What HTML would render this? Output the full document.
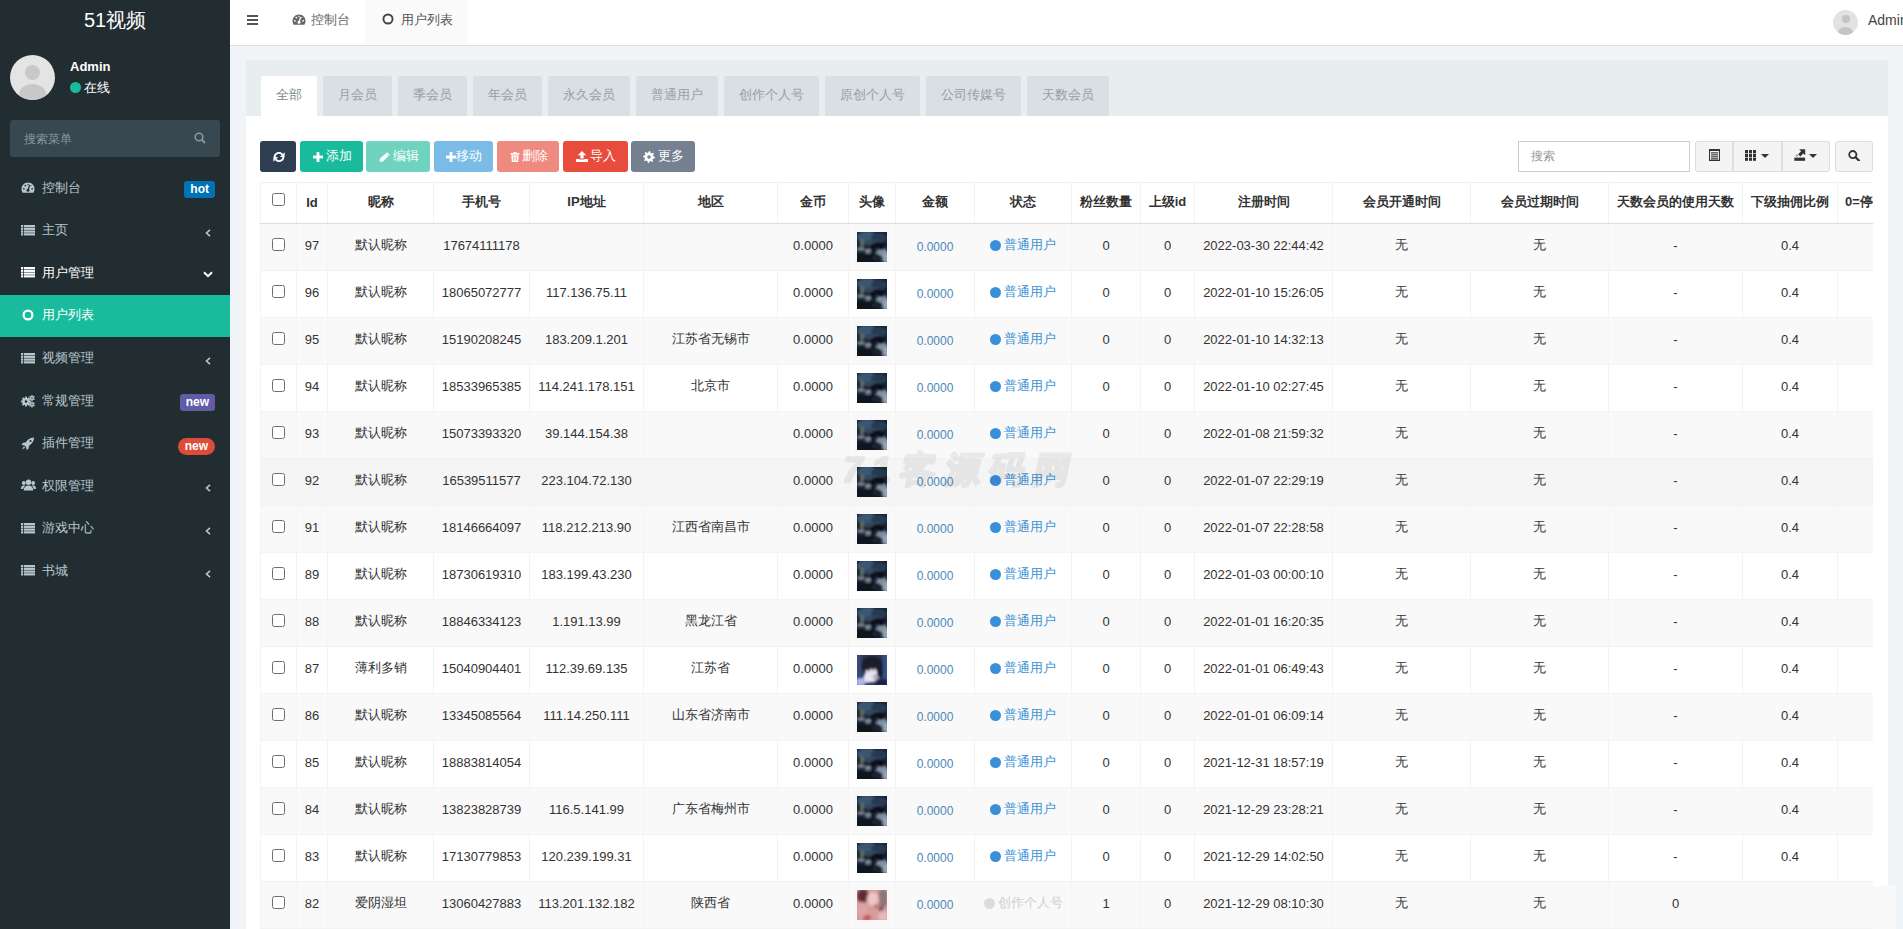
<!DOCTYPE html><html><head><meta charset="utf-8"><style>
*{box-sizing:border-box;margin:0;padding:0}
html,body{width:1903px;height:929px;overflow:hidden;background:#f1f4f6;font-family:"Liberation Sans",sans-serif;font-size:13px;color:#333}
.a{position:absolute}
#side{position:absolute;left:0;top:0;width:230px;height:929px;background:#222d32}
#logo{position:absolute;left:0;top:0;width:230px;height:45px;color:#fff;font-size:20px;text-align:center;line-height:40px}
#avatar{position:absolute;left:10px;top:55px;width:45px;height:45px;border-radius:50%;background:#e4e4e4;overflow:hidden}
#avatar:before{content:"";position:absolute;left:15px;top:10px;width:15px;height:15px;border-radius:50%;background:#c8c8c8}
#avatar:after{content:"";position:absolute;left:9px;top:29px;width:27px;height:20px;border-radius:50%;background:#c8c8c8}
#uname{position:absolute;left:70px;top:58.5px;color:#fff;font-weight:bold;font-size:13px}
#ustat{position:absolute;left:70px;top:79.2px;color:#fff;font-size:13px}
#ustat i{display:inline-block;width:11px;height:11px;border-radius:50%;background:#18bc9c;margin-right:3px;vertical-align:-1px}
#search{position:absolute;left:10px;top:120px;width:210px;height:37px;background:#374850;border-radius:3px;color:#8a979e;font-size:12px;padding:10.5px 0 0 14px}
#search svg{position:absolute;right:14px;top:12px}
.mi{position:absolute;left:0;width:230px;height:42.57px;color:#b8c7ce;font-size:13px}
.mi svg.ic{position:absolute;left:21px}
.mi .tx{position:absolute;left:42px;top:11.9px}
.mi .ar{position:absolute;left:205px;top:19.7px}
.mi.act{color:#fff}
.mi.sel{background:#18bc9c;color:#fff}
.badge{position:absolute;right:15px;top:14.2px;height:17px;padding:0 6px;border-radius:3px;color:#fff;font-size:12px;font-weight:bold;line-height:17px}
#hdr{position:absolute;left:230px;top:0;width:1673px;height:46px;background:#fff;border-bottom:1px solid #dcdfe2}
.htab{position:absolute;top:0;height:44px;color:#666;font-size:13px}
.htab .tx{position:absolute;top:10.8px}
#hav{position:absolute;left:1603px;top:10px;width:25px;height:25px;border-radius:50%;background:#e2e2e2;overflow:hidden}
#hav:before{content:"";position:absolute;left:8.5px;top:5px;width:8px;height:8px;border-radius:50%;background:#c4c4c4}
#hav:after{content:"";position:absolute;left:5px;top:16.5px;width:15px;height:11px;border-radius:50%;background:#c4c4c4}
#hname{position:absolute;left:1638px;top:12px;color:#444;font-size:14px}
#panel{position:absolute;left:246px;top:60px;width:1642px;height:900px;background:#fff}
#ph{position:absolute;left:0;top:0;width:1642px;height:56px;background:#e8edf0}
.tab{position:absolute;top:16px;height:40px;background:#d9dfe3;color:#95a0a6;font-size:13px;text-align:center;line-height:38px;border-radius:3px 3px 0 0}
.tab.on{background:#fff;color:#7b8a8b}
.btn{position:absolute;top:81px;height:31px;border-radius:3px;color:#fff;font-size:12.5px;line-height:30px;font-weight:500}
.btn svg{position:absolute}
.btn .tx{position:absolute;top:0}
#sinp{position:absolute;left:1272px;top:81px;width:172px;height:31px;border:1px solid #ccc;color:#999;padding:6px 0 0 12px;font-size:12px}
.tb{position:absolute;top:81px;height:31px;background:#f4f4f4;border:1px solid #ddd}
.tb svg{position:absolute}
#tw{position:absolute;left:14px;top:122px;width:1612.5px;height:800px;overflow:hidden}
#tbl{border-collapse:collapse;table-layout:fixed;width:1731px;font-size:13px;color:#333}
#tbl td,#tbl th{border:1px solid #f3f3f3;text-align:center;vertical-align:middle;padding:0 4px;white-space:nowrap;overflow:hidden}
#tbl th{font-weight:bold;height:41px;border-bottom:1px solid #ddd;border-top:1px solid #f0f0f0;padding-bottom:2px}
#tbl tr.r td{height:47px;padding-bottom:4px}
#tbl tr.s td{background:#f9f9f9;border-left-color:#f6f6f6;border-right-color:#f6f6f6}
#tbl tr.h td{background:#f5f5f5}
.cb{display:inline-block;width:13px;height:13px;border:1px solid #6f6f6f;border-radius:2.5px;background:#fff;vertical-align:middle;position:relative}
#tbl td .cb{top:-1.5px}
#tbl th .cb{top:-3.5px}
.av{display:inline-block;width:30px;height:30px;vertical-align:middle;overflow:hidden;position:relative;top:2px}
.av svg{display:block}
.amt{color:#4a88b8;position:relative;top:1px;font-size:12px}
.st{color:#3a91d6}
.st i{display:inline-block;width:11px;height:11px;border-radius:50%;background:#3a8fd9;margin-right:3px;vertical-align:-2px}
.st2{color:#cfcfcf}
.st2 i{display:inline-block;width:11px;height:11px;border-radius:50%;background:#dcdcdc;margin-right:3px;vertical-align:-2px}
#wm{position:absolute;left:838px;top:437px;font-size:41px;font-weight:900;font-style:italic;color:rgba(0,0,0,0.075);letter-spacing:-1px;white-space:nowrap;transform:skewX(-8deg)}
</style></head><body>
<div id="side"><div id="logo">51视频</div><div id="avatar"></div><div id="uname">Admin</div><div id="ustat"><i></i>在线</div>
<div id="search">搜索菜单<svg width="12" height="12" viewBox="0 0 12 12"><circle cx="5" cy="5" r="3.8" fill="none" stroke="#8a979e" stroke-width="1.6"/><path d="M7.8 7.8L11 11" stroke="#8a979e" stroke-width="2"/></svg></div>
<div class="mi" style="top:166.80px"><svg width="14" height="11" viewBox="0 0 14 11" style="position:absolute;left:21px;top:15.5px"><path d="M7 0.5C3.4 0.5 0.5 3.4 0.5 7C0.5 8.5 0.9 9.8 1.6 10.8H12.4C13.1 9.8 13.5 8.5 13.5 7C13.5 3.4 10.6 0.5 7 0.5Z" fill="#b8c7ce"/><circle cx="7" cy="8.2" r="1.5" fill="#222d32"/><path d="M7 8.2L8.6 3" stroke="#222d32" stroke-width="1.2"/><circle cx="2.9" cy="6.8" r="0.9" fill="#222d32"/><circle cx="4.3" cy="3.6" r="0.9" fill="#222d32"/><circle cx="7" cy="2.4" r="0.7" fill="#222d32"/><circle cx="11.1" cy="6.8" r="0.9" fill="#222d32"/><circle cx="9.8" cy="3.6" r="0.6" fill="#222d32"/></svg><span class="tx">控制台</span><span class="badge" style="background:#0073b7">hot</span></div>
<div class="mi" style="top:209.37px"><svg width="14" height="11" viewBox="0 0 14 11" style="position:absolute;left:21px;top:15.5px"><rect x="0" y="0.00" width="2.2" height="2.2" fill="#b8c7ce"/><rect x="3" y="0.00" width="11" height="2.2" fill="#b8c7ce"/><rect x="0" y="2.75" width="2.2" height="2.2" fill="#b8c7ce"/><rect x="3" y="2.75" width="11" height="2.2" fill="#b8c7ce"/><rect x="0" y="5.50" width="2.2" height="2.2" fill="#b8c7ce"/><rect x="3" y="5.50" width="11" height="2.2" fill="#b8c7ce"/><rect x="0" y="8.25" width="2.2" height="2.2" fill="#b8c7ce"/><rect x="3" y="8.25" width="11" height="2.2" fill="#b8c7ce"/></svg><span class="tx">主页</span><svg class="ar" width="6" height="8" viewBox="0 0 6 8"><path d="M5 0.8L1.5 4L5 7.2" fill="none" stroke="currentColor" stroke-width="1.6"/></svg></div>
<div class="mi act" style="top:251.94px"><svg width="14" height="11" viewBox="0 0 14 11" style="position:absolute;left:21px;top:15.5px"><rect x="0" y="0.00" width="2.2" height="2.2" fill="#fff"/><rect x="3" y="0.00" width="11" height="2.2" fill="#fff"/><rect x="0" y="2.75" width="2.2" height="2.2" fill="#fff"/><rect x="3" y="2.75" width="11" height="2.2" fill="#fff"/><rect x="0" y="5.50" width="2.2" height="2.2" fill="#fff"/><rect x="3" y="5.50" width="11" height="2.2" fill="#fff"/><rect x="0" y="8.25" width="2.2" height="2.2" fill="#fff"/><rect x="3" y="8.25" width="11" height="2.2" fill="#fff"/></svg><span class="tx">用户管理</span><svg class="ar" style="left:203px;top:19.5px" width="10" height="7" viewBox="0 0 10 7"><path d="M1 1.2L5 5.2L9 1.2" fill="none" stroke="currentColor" stroke-width="2"/></svg></div>
<div class="mi sel" style="top:294.51px"><svg width="12" height="12" viewBox="0 0 12 12" style="position:absolute;left:22px;top:14.5px"><circle cx="6" cy="6" r="4.40" fill="none" stroke="#fff" stroke-width="2.2"/></svg><span class="tx">用户列表</span></div>
<div class="mi" style="top:337.08px"><svg width="14" height="11" viewBox="0 0 14 11" style="position:absolute;left:21px;top:15.5px"><rect x="0" y="0.00" width="2.2" height="2.2" fill="#b8c7ce"/><rect x="3" y="0.00" width="11" height="2.2" fill="#b8c7ce"/><rect x="0" y="2.75" width="2.2" height="2.2" fill="#b8c7ce"/><rect x="3" y="2.75" width="11" height="2.2" fill="#b8c7ce"/><rect x="0" y="5.50" width="2.2" height="2.2" fill="#b8c7ce"/><rect x="3" y="5.50" width="11" height="2.2" fill="#b8c7ce"/><rect x="0" y="8.25" width="2.2" height="2.2" fill="#b8c7ce"/><rect x="3" y="8.25" width="11" height="2.2" fill="#b8c7ce"/></svg><span class="tx">视频管理</span><svg class="ar" width="6" height="8" viewBox="0 0 6 8"><path d="M5 0.8L1.5 4L5 7.2" fill="none" stroke="currentColor" stroke-width="1.6"/></svg></div>
<div class="mi" style="top:379.65px"><svg width="14" height="13" viewBox="0 0 14 13" style="position:absolute;left:21px;top:15px"><g fill="#b8c7ce"><circle cx="5" cy="6.5" r="3.6"/><rect x="4" y="1.6" width="2" height="2" transform="rotate(0 5 6.5)"/><rect x="4" y="1.6" width="2" height="2" transform="rotate(45 5 6.5)"/><rect x="4" y="1.6" width="2" height="2" transform="rotate(90 5 6.5)"/><rect x="4" y="1.6" width="2" height="2" transform="rotate(135 5 6.5)"/><rect x="4" y="1.6" width="2" height="2" transform="rotate(180 5 6.5)"/><rect x="4" y="1.6" width="2" height="2" transform="rotate(225 5 6.5)"/><rect x="4" y="1.6" width="2" height="2" transform="rotate(270 5 6.5)"/><rect x="4" y="1.6" width="2" height="2" transform="rotate(315 5 6.5)"/><circle cx="11" cy="3" r="2.2"/><rect x="10.4" y="0" width="1.2" height="1.2" transform="rotate(0 11 3)"/><rect x="10.4" y="0" width="1.2" height="1.2" transform="rotate(60 11 3)"/><rect x="10.4" y="0" width="1.2" height="1.2" transform="rotate(120 11 3)"/><rect x="10.4" y="0" width="1.2" height="1.2" transform="rotate(180 11 3)"/><rect x="10.4" y="0" width="1.2" height="1.2" transform="rotate(240 11 3)"/><rect x="10.4" y="0" width="1.2" height="1.2" transform="rotate(300 11 3)"/><circle cx="11" cy="9.5" r="2.2"/><rect x="10.4" y="6.5" width="1.2" height="1.2" transform="rotate(0 11 9.5)"/><rect x="10.4" y="6.5" width="1.2" height="1.2" transform="rotate(60 11 9.5)"/><rect x="10.4" y="6.5" width="1.2" height="1.2" transform="rotate(120 11 9.5)"/><rect x="10.4" y="6.5" width="1.2" height="1.2" transform="rotate(180 11 9.5)"/><rect x="10.4" y="6.5" width="1.2" height="1.2" transform="rotate(240 11 9.5)"/><rect x="10.4" y="6.5" width="1.2" height="1.2" transform="rotate(300 11 9.5)"/></g><circle cx="5" cy="6.5" r="1.3" fill="#222d32"/><circle cx="11" cy="3" r="0.8" fill="#222d32"/><circle cx="11" cy="9.5" r="0.8" fill="#222d32"/></svg><span class="tx">常规管理</span><span class="badge" style="background:#605ca8">new</span></div>
<div class="mi" style="top:422.22px"><svg width="14" height="13" viewBox="0 0 14 13" style="position:absolute;left:21px;top:15px"><path d="M12.5 0.5C9 0.8 6.5 2.6 4.6 5.6L2 5.8L0.5 8L3.2 8.3L5.2 10.3L5.5 13L7.7 11.5L7.9 8.9C10.9 7 12.7 4.5 13 1Z" fill="#b8c7ce"/><circle cx="9.5" cy="4" r="1.1" fill="#222d32"/><path d="M2.8 9.3L1 12.5L4.2 10.7Z" fill="#b8c7ce"/></svg><span class="tx">插件管理</span><span class="badge" style="background:#dd4b39;border-radius:9px;padding:0 7px;top:15.5px">new</span></div>
<div class="mi" style="top:464.79px"><svg width="15" height="12" viewBox="0 0 15 12" style="position:absolute;left:21px;top:14px"><g fill="#b8c7ce"><circle cx="7.5" cy="3.2" r="2.7"/><path d="M2.8 11.5C2.8 8.2 4.6 6.6 7.5 6.6C10.4 6.6 12.2 8.2 12.2 11.5Z"/><circle cx="2.8" cy="4" r="1.9"/><path d="M0 10C0 7.4 1 6.4 2.8 6.4C3.4 6.4 3.8 6.5 4.2 6.7C3 7.6 2.4 8.7 2.3 10Z"/><circle cx="12.2" cy="4" r="1.9"/><path d="M15 10C15 7.4 14 6.4 12.2 6.4C11.6 6.4 11.2 6.5 10.8 6.7C12 7.6 12.6 8.7 12.7 10Z"/></g></svg><span class="tx">权限管理</span><svg class="ar" width="6" height="8" viewBox="0 0 6 8"><path d="M5 0.8L1.5 4L5 7.2" fill="none" stroke="currentColor" stroke-width="1.6"/></svg></div>
<div class="mi" style="top:507.36px"><svg width="14" height="11" viewBox="0 0 14 11" style="position:absolute;left:21px;top:15.5px"><rect x="0" y="0.00" width="2.2" height="2.2" fill="#b8c7ce"/><rect x="3" y="0.00" width="11" height="2.2" fill="#b8c7ce"/><rect x="0" y="2.75" width="2.2" height="2.2" fill="#b8c7ce"/><rect x="3" y="2.75" width="11" height="2.2" fill="#b8c7ce"/><rect x="0" y="5.50" width="2.2" height="2.2" fill="#b8c7ce"/><rect x="3" y="5.50" width="11" height="2.2" fill="#b8c7ce"/><rect x="0" y="8.25" width="2.2" height="2.2" fill="#b8c7ce"/><rect x="3" y="8.25" width="11" height="2.2" fill="#b8c7ce"/></svg><span class="tx">游戏中心</span><svg class="ar" width="6" height="8" viewBox="0 0 6 8"><path d="M5 0.8L1.5 4L5 7.2" fill="none" stroke="currentColor" stroke-width="1.6"/></svg></div>
<div class="mi" style="top:549.93px"><svg width="14" height="11" viewBox="0 0 14 11" style="position:absolute;left:21px;top:15.5px"><rect x="0" y="0.00" width="2.2" height="2.2" fill="#b8c7ce"/><rect x="3" y="0.00" width="11" height="2.2" fill="#b8c7ce"/><rect x="0" y="2.75" width="2.2" height="2.2" fill="#b8c7ce"/><rect x="3" y="2.75" width="11" height="2.2" fill="#b8c7ce"/><rect x="0" y="5.50" width="2.2" height="2.2" fill="#b8c7ce"/><rect x="3" y="5.50" width="11" height="2.2" fill="#b8c7ce"/><rect x="0" y="8.25" width="2.2" height="2.2" fill="#b8c7ce"/><rect x="3" y="8.25" width="11" height="2.2" fill="#b8c7ce"/></svg><span class="tx">书城</span><svg class="ar" width="6" height="8" viewBox="0 0 6 8"><path d="M5 0.8L1.5 4L5 7.2" fill="none" stroke="currentColor" stroke-width="1.6"/></svg></div>
</div>
<div id="hdr"><svg width="11" height="10" viewBox="0 0 11 10" style="position:absolute;left:17px;top:15px"><rect x="0" y="0" width="11" height="2" fill="#555"/><rect x="0" y="4" width="11" height="2" fill="#555"/><rect x="0" y="8" width="11" height="2" fill="#555"/></svg><div class="htab" style="left:48px;width:87px"><svg width="14" height="11" viewBox="0 0 14 11" style="position:absolute;left:14px;top:14px"><path d="M7 0.5C3.4 0.5 0.5 3.4 0.5 7C0.5 8.5 0.9 9.8 1.6 10.8H12.4C13.1 9.8 13.5 8.5 13.5 7C13.5 3.4 10.6 0.5 7 0.5Z" fill="#666"/><circle cx="7" cy="8.2" r="1.5" fill="#fff"/><path d="M7 8.2L8.6 3" stroke="#fff" stroke-width="1.2"/><circle cx="2.9" cy="6.8" r="0.9" fill="#fff"/><circle cx="4.3" cy="3.6" r="0.9" fill="#fff"/><circle cx="7" cy="2.4" r="0.7" fill="#fff"/><circle cx="11.1" cy="6.8" r="0.9" fill="#fff"/><circle cx="9.8" cy="3.6" r="0.6" fill="#fff"/></svg><span class="tx" style="left:33px">控制台</span></div><div class="htab" style="left:135px;width:103px;background:#fafafa"><svg width="12" height="12" viewBox="0 0 12 12" style="position:absolute;left:17px;top:13px"><circle cx="6" cy="6" r="4.55" fill="none" stroke="#444" stroke-width="1.9"/></svg><span class="tx" style="left:36px;color:#555">用户列表</span></div><div id="hav"></div><div id="hname">Admin</div></div>
<div id="panel"><div id="ph"><div class="tab on" style="left:15.0px;width:56.0px">全部</div><div class="tab" style="left:77.4px;width:68.4px">月会员</div><div class="tab" style="left:152.2px;width:68.8px">季会员</div><div class="tab" style="left:227.3px;width:68.4px">年会员</div><div class="tab" style="left:302.0px;width:82.0px">永久会员</div><div class="tab" style="left:390.3px;width:81.5px">普通用户</div><div class="tab" style="left:478.0px;width:94.7px">创作个人号</div><div class="tab" style="left:579.2px;width:94.6px">原创个人号</div><div class="tab" style="left:680.4px;width:94.6px">公司传媒号</div><div class="tab" style="left:781.0px;width:82.0px">天数会员</div></div><div class="btn" style="left:14.0px;width:36.0px;background:#2c3e50"><svg width="12" height="10" viewBox="0 0 12 10" style="left:12.5px;top:10.5px"><path d="M1.6 5A4.3 4.3 0 0 1 9.3 2.6" fill="none" stroke="#fff" stroke-width="1.9"/><path d="M11.6 0.3V5H6.9Z" fill="#fff"/><path d="M10.4 5A4.3 4.3 0 0 1 2.7 7.4" fill="none" stroke="#fff" stroke-width="1.9"/><path d="M0.4 9.7V5H5.1Z" fill="#fff"/></svg></div><div class="btn" style="left:54.0px;width:63.0px;background:#18bc9c"><svg width="10" height="10" viewBox="0 0 10 10" style="left:13px;top:10.5px"><rect x="3.6" y="0" width="2.8" height="10" fill="#fff"/><rect x="0" y="3.6" width="10" height="2.8" fill="#fff"/></svg><span class="tx" style="left:26.0px">添加</span></div><div class="btn" style="left:120.0px;width:64.0px;background:#6fd3bf"><svg width="11" height="10" viewBox="0 0 11 10" style="left:13px;top:10.5px"><path d="M8.2 0.2L10.8 2.8L4 9.6L0.6 10L1 6.6Z" fill="#fff"/><path d="M7 1.4L9.6 4" stroke="#6fd3bf" stroke-width="0.6"/></svg><span class="tx" style="left:27.0px">编辑</span></div><div class="btn" style="left:188.0px;width:59.0px;background:#7bbce7"><svg width="10" height="10" viewBox="0 0 10 10" style="left:12px;top:10.5px"><rect x="3.6" y="0" width="2.8" height="10" fill="#fff"/><rect x="0" y="3.6" width="10" height="2.8" fill="#fff"/></svg><span class="tx" style="left:21.5px">移动</span></div><div class="btn" style="left:251.0px;width:61.5px;background:#ef8a80"><svg width="10" height="10" viewBox="0 0 10 10" style="left:12.5px;top:10.5px"><rect x="0.5" y="1" width="9" height="1.6" fill="#fff"/><rect x="3.5" y="0" width="3" height="1.5" fill="#fff"/><path d="M1.3 3.2H8.7L8.2 10H1.8Z" fill="#fff"/><rect x="3.3" y="4.3" width="0.9" height="4.5" fill="#ef8a80"/><rect x="5.8" y="4.3" width="0.9" height="4.5" fill="#ef8a80"/></svg><span class="tx" style="left:25.0px">删除</span></div><div class="btn" style="left:317.0px;width:64.6px;background:#e74c3c"><svg width="12" height="11" viewBox="0 0 12 11" style="left:12.5px;top:10px"><path d="M6 0L10.2 4.2H7.6V7.5H4.4V4.2H1.8Z" fill="#fff"/><path d="M0 8H3.6V8.6H8.4V8H12V11H0Z" fill="#fff"/></svg><span class="tx" style="left:27.0px">导入</span></div><div class="btn" style="left:385.0px;width:63.7px;background:#758190"><svg width="12" height="12" viewBox="0 0 12 12" style="left:12px;top:9.5px"><polygon points="11.90,6.00 11.79,7.15 9.97,7.65 9.58,8.39 10.17,10.17 9.28,10.91 7.65,9.97 6.84,10.22 6.00,11.90 4.85,11.79 4.35,9.97 3.61,9.58 1.83,10.17 1.09,9.28 2.03,7.65 1.78,6.84 0.10,6.00 0.21,4.85 2.03,4.35 2.42,3.61 1.83,1.83 2.72,1.09 4.35,2.03 5.16,1.78 6.00,0.10 7.15,0.21 7.65,2.03 8.39,2.42 10.17,1.83 10.91,2.72 9.97,4.35 10.22,5.16" fill="#fff"/><circle cx="6" cy="6" r="1.8" fill="#758190"/></svg><span class="tx" style="left:26.5px">更多</span></div><div id="sinp">搜索</div><div class="tb" style="left:1448.5px;width:38.5px;border-radius:3px 0 0 3px"><svg width="11" height="12" viewBox="0 0 11 12" style="left:13px;top:7px"><rect x="0.5" y="0.5" width="10" height="11" fill="none" stroke="#333" stroke-width="1.1"/><rect x="0" y="0" width="11" height="2" fill="#333"/><rect x="2" y="3.3" width="7" height="1.1" fill="#333"/><rect x="2" y="5.3" width="7" height="1.1" fill="#333"/><rect x="2" y="7.3" width="7" height="1.1" fill="#333"/><rect x="2" y="9.3" width="7" height="1.1" fill="#333"/><rect x="0" y="10.8" width="11" height="1.2" fill="#333"/></svg></div><div class="tb" style="left:1486.5px;width:49.5px;border-left:1px solid #e0e0e0"><svg width="12" height="11" viewBox="0 0 12 11" style="left:11.5px;top:8px"><rect x="0" y="0.0" width="3" height="3.2" fill="#333"/><rect x="4" y="0.0" width="3" height="3.2" fill="#333"/><rect x="8" y="0.0" width="3" height="3.2" fill="#333"/><rect x="0" y="3.8" width="3" height="3.2" fill="#333"/><rect x="4" y="3.8" width="3" height="3.2" fill="#333"/><rect x="8" y="3.8" width="3" height="3.2" fill="#333"/><rect x="0" y="7.6" width="3" height="3.2" fill="#333"/><rect x="4" y="7.6" width="3" height="3.2" fill="#333"/><rect x="8" y="7.6" width="3" height="3.2" fill="#333"/></svg><svg width="8" height="4" viewBox="0 0 8 4" style="left:27.5px;top:12px"><path d="M0 0H8L4 4Z" fill="#333"/></svg></div><div class="tb" style="left:1535.5px;width:48px;border-left:1px solid #e0e0e0;border-radius:0 3px 3px 0"><svg width="12" height="12" viewBox="0 0 12 12" style="left:11px;top:7px"><path d="M5.2 0.3H11.2V6.3L9.3 4.4L6.3 7.4L4.1 5.2L7.1 2.2Z" fill="#333"/><rect x="0.3" y="8.6" width="10.8" height="3.2" fill="#333"/><path d="M2.6 5.2L3.8 6.4L2.4 7.8Z" fill="#333"/></svg><svg width="8" height="4" viewBox="0 0 8 4" style="left:26px;top:12px"><path d="M0 0H8L4 4Z" fill="#333"/></svg></div><div class="tb" style="left:1588.5px;width:38.5px;border-radius:3px"><svg width="12" height="11" viewBox="0 0 12 11" style="left:12px;top:8px"><circle cx="4.8" cy="4.6" r="3.6" fill="none" stroke="#333" stroke-width="1.8"/><path d="M7.5 7.3L11 10.6" stroke="#333" stroke-width="2.2" stroke-linecap="round"/></svg></div><div id="tw"><table id="tbl"><colgroup><col style="width:36.0px"><col style="width:31.0px"><col style="width:106.0px"><col style="width:96.0px"><col style="width:114.0px"><col style="width:134.0px"><col style="width:71.0px"><col style="width:47.0px"><col style="width:79.0px"><col style="width:97.0px"><col style="width:69.0px"><col style="width:54.0px"><col style="width:138.0px"><col style="width:138.0px"><col style="width:138.0px"><col style="width:134.0px"><col style="width:95.0px"><col style="width:153.0px"></colgroup><tr><th><span class="cb"></span></th><th>Id</th><th>昵称</th><th>手机号</th><th>IP地址</th><th>地区</th><th>金币</th><th>头像</th><th>金额</th><th>状态</th><th>粉丝数量</th><th>上级id</th><th>注册时间</th><th>会员开通时间</th><th>会员过期时间</th><th>天数会员的使用天数</th><th>下级抽佣比例</th><th style="text-align:left;padding-left:7px">0=停用,1=正常</th></tr><tr class="r s"><td><span class="cb"></span></td><td>97</td><td>默认昵称</td><td>17674111178</td><td></td><td></td><td>0.0000</td><td><span class="av"><svg width="30" height="30" viewBox="0 0 30 30" style=""><defs><filter id="bf0" x="-10%" y="-10%" width="120%" height="120%"><feGaussianBlur stdDeviation="1.3"/></filter><clipPath id="cf0"><rect width="30" height="30"/></clipPath></defs><g clip-path="url(#cf0)"><rect x="-2" y="-2" width="34" height="34" fill="#1a2433"/><g filter="url(#bf0)"><ellipse cx="10" cy="5" rx="10" ry="6" fill="#3a5673"/><ellipse cx="22" cy="6" rx="8" ry="5" fill="#263a52"/><ellipse cx="16" cy="11" rx="10" ry="3" fill="#34475c"/><ellipse cx="25" cy="22" rx="6" ry="6" fill="#7f90a2"/><ellipse cx="29" cy="26" rx="4" ry="5" fill="#93a3b4"/><path d="M13 21C14 14 19 11 27 14" stroke="#0b111b" stroke-width="5" fill="none"/><ellipse cx="24" cy="16" rx="3" ry="2" fill="#0b111b"/><ellipse cx="5" cy="11" rx="2" ry="4" fill="#5f6e62"/><ellipse cx="4" cy="17" rx="4" ry="2" fill="#6f7b86"/><ellipse cx="11" cy="19" rx="3" ry="2.5" fill="#7d8894"/><rect x="-2" y="22" width="24" height="10" fill="#0d121c"/><ellipse cx="20" cy="26" rx="6" ry="3" fill="#1a2330"/></g></g></svg></span></td><td><span class="amt">0.0000</span></td><td><span class="st"><i></i>普通用户</span></td><td>0</td><td>0</td><td>2022-03-30 22:44:42</td><td>无</td><td>无</td><td>-</td><td>0.4</td><td></td></tr><tr class="r"><td><span class="cb"></span></td><td>96</td><td>默认昵称</td><td>18065072777</td><td>117.136.75.11</td><td></td><td>0.0000</td><td><span class="av"><svg width="30" height="30" viewBox="0 0 30 30" style=""><defs><filter id="bf1" x="-10%" y="-10%" width="120%" height="120%"><feGaussianBlur stdDeviation="1.3"/></filter><clipPath id="cf1"><rect width="30" height="30"/></clipPath></defs><g clip-path="url(#cf1)"><rect x="-2" y="-2" width="34" height="34" fill="#1a2433"/><g filter="url(#bf1)"><ellipse cx="10" cy="5" rx="10" ry="6" fill="#3a5673"/><ellipse cx="22" cy="6" rx="8" ry="5" fill="#263a52"/><ellipse cx="16" cy="11" rx="10" ry="3" fill="#34475c"/><ellipse cx="25" cy="22" rx="6" ry="6" fill="#7f90a2"/><ellipse cx="29" cy="26" rx="4" ry="5" fill="#93a3b4"/><path d="M13 21C14 14 19 11 27 14" stroke="#0b111b" stroke-width="5" fill="none"/><ellipse cx="24" cy="16" rx="3" ry="2" fill="#0b111b"/><ellipse cx="5" cy="11" rx="2" ry="4" fill="#5f6e62"/><ellipse cx="4" cy="17" rx="4" ry="2" fill="#6f7b86"/><ellipse cx="11" cy="19" rx="3" ry="2.5" fill="#7d8894"/><rect x="-2" y="22" width="24" height="10" fill="#0d121c"/><ellipse cx="20" cy="26" rx="6" ry="3" fill="#1a2330"/></g></g></svg></span></td><td><span class="amt">0.0000</span></td><td><span class="st"><i></i>普通用户</span></td><td>0</td><td>0</td><td>2022-01-10 15:26:05</td><td>无</td><td>无</td><td>-</td><td>0.4</td><td></td></tr><tr class="r s"><td><span class="cb"></span></td><td>95</td><td>默认昵称</td><td>15190208245</td><td>183.209.1.201</td><td>江苏省无锡市</td><td>0.0000</td><td><span class="av"><svg width="30" height="30" viewBox="0 0 30 30" style=""><defs><filter id="bf2" x="-10%" y="-10%" width="120%" height="120%"><feGaussianBlur stdDeviation="1.3"/></filter><clipPath id="cf2"><rect width="30" height="30"/></clipPath></defs><g clip-path="url(#cf2)"><rect x="-2" y="-2" width="34" height="34" fill="#1a2433"/><g filter="url(#bf2)"><ellipse cx="10" cy="5" rx="10" ry="6" fill="#3a5673"/><ellipse cx="22" cy="6" rx="8" ry="5" fill="#263a52"/><ellipse cx="16" cy="11" rx="10" ry="3" fill="#34475c"/><ellipse cx="25" cy="22" rx="6" ry="6" fill="#7f90a2"/><ellipse cx="29" cy="26" rx="4" ry="5" fill="#93a3b4"/><path d="M13 21C14 14 19 11 27 14" stroke="#0b111b" stroke-width="5" fill="none"/><ellipse cx="24" cy="16" rx="3" ry="2" fill="#0b111b"/><ellipse cx="5" cy="11" rx="2" ry="4" fill="#5f6e62"/><ellipse cx="4" cy="17" rx="4" ry="2" fill="#6f7b86"/><ellipse cx="11" cy="19" rx="3" ry="2.5" fill="#7d8894"/><rect x="-2" y="22" width="24" height="10" fill="#0d121c"/><ellipse cx="20" cy="26" rx="6" ry="3" fill="#1a2330"/></g></g></svg></span></td><td><span class="amt">0.0000</span></td><td><span class="st"><i></i>普通用户</span></td><td>0</td><td>0</td><td>2022-01-10 14:32:13</td><td>无</td><td>无</td><td>-</td><td>0.4</td><td></td></tr><tr class="r"><td><span class="cb"></span></td><td>94</td><td>默认昵称</td><td>18533965385</td><td>114.241.178.151</td><td>北京市</td><td>0.0000</td><td><span class="av"><svg width="30" height="30" viewBox="0 0 30 30" style=""><defs><filter id="bf3" x="-10%" y="-10%" width="120%" height="120%"><feGaussianBlur stdDeviation="1.3"/></filter><clipPath id="cf3"><rect width="30" height="30"/></clipPath></defs><g clip-path="url(#cf3)"><rect x="-2" y="-2" width="34" height="34" fill="#1a2433"/><g filter="url(#bf3)"><ellipse cx="10" cy="5" rx="10" ry="6" fill="#3a5673"/><ellipse cx="22" cy="6" rx="8" ry="5" fill="#263a52"/><ellipse cx="16" cy="11" rx="10" ry="3" fill="#34475c"/><ellipse cx="25" cy="22" rx="6" ry="6" fill="#7f90a2"/><ellipse cx="29" cy="26" rx="4" ry="5" fill="#93a3b4"/><path d="M13 21C14 14 19 11 27 14" stroke="#0b111b" stroke-width="5" fill="none"/><ellipse cx="24" cy="16" rx="3" ry="2" fill="#0b111b"/><ellipse cx="5" cy="11" rx="2" ry="4" fill="#5f6e62"/><ellipse cx="4" cy="17" rx="4" ry="2" fill="#6f7b86"/><ellipse cx="11" cy="19" rx="3" ry="2.5" fill="#7d8894"/><rect x="-2" y="22" width="24" height="10" fill="#0d121c"/><ellipse cx="20" cy="26" rx="6" ry="3" fill="#1a2330"/></g></g></svg></span></td><td><span class="amt">0.0000</span></td><td><span class="st"><i></i>普通用户</span></td><td>0</td><td>0</td><td>2022-01-10 02:27:45</td><td>无</td><td>无</td><td>-</td><td>0.4</td><td></td></tr><tr class="r s"><td><span class="cb"></span></td><td>93</td><td>默认昵称</td><td>15073393320</td><td>39.144.154.38</td><td></td><td>0.0000</td><td><span class="av"><svg width="30" height="30" viewBox="0 0 30 30" style=""><defs><filter id="bf4" x="-10%" y="-10%" width="120%" height="120%"><feGaussianBlur stdDeviation="1.3"/></filter><clipPath id="cf4"><rect width="30" height="30"/></clipPath></defs><g clip-path="url(#cf4)"><rect x="-2" y="-2" width="34" height="34" fill="#1a2433"/><g filter="url(#bf4)"><ellipse cx="10" cy="5" rx="10" ry="6" fill="#3a5673"/><ellipse cx="22" cy="6" rx="8" ry="5" fill="#263a52"/><ellipse cx="16" cy="11" rx="10" ry="3" fill="#34475c"/><ellipse cx="25" cy="22" rx="6" ry="6" fill="#7f90a2"/><ellipse cx="29" cy="26" rx="4" ry="5" fill="#93a3b4"/><path d="M13 21C14 14 19 11 27 14" stroke="#0b111b" stroke-width="5" fill="none"/><ellipse cx="24" cy="16" rx="3" ry="2" fill="#0b111b"/><ellipse cx="5" cy="11" rx="2" ry="4" fill="#5f6e62"/><ellipse cx="4" cy="17" rx="4" ry="2" fill="#6f7b86"/><ellipse cx="11" cy="19" rx="3" ry="2.5" fill="#7d8894"/><rect x="-2" y="22" width="24" height="10" fill="#0d121c"/><ellipse cx="20" cy="26" rx="6" ry="3" fill="#1a2330"/></g></g></svg></span></td><td><span class="amt">0.0000</span></td><td><span class="st"><i></i>普通用户</span></td><td>0</td><td>0</td><td>2022-01-08 21:59:32</td><td>无</td><td>无</td><td>-</td><td>0.4</td><td></td></tr><tr class="r h"><td><span class="cb"></span></td><td>92</td><td>默认昵称</td><td>16539511577</td><td>223.104.72.130</td><td></td><td>0.0000</td><td><span class="av"><svg width="30" height="30" viewBox="0 0 30 30" style=""><defs><filter id="bf5" x="-10%" y="-10%" width="120%" height="120%"><feGaussianBlur stdDeviation="1.3"/></filter><clipPath id="cf5"><rect width="30" height="30"/></clipPath></defs><g clip-path="url(#cf5)"><rect x="-2" y="-2" width="34" height="34" fill="#1a2433"/><g filter="url(#bf5)"><ellipse cx="10" cy="5" rx="10" ry="6" fill="#3a5673"/><ellipse cx="22" cy="6" rx="8" ry="5" fill="#263a52"/><ellipse cx="16" cy="11" rx="10" ry="3" fill="#34475c"/><ellipse cx="25" cy="22" rx="6" ry="6" fill="#7f90a2"/><ellipse cx="29" cy="26" rx="4" ry="5" fill="#93a3b4"/><path d="M13 21C14 14 19 11 27 14" stroke="#0b111b" stroke-width="5" fill="none"/><ellipse cx="24" cy="16" rx="3" ry="2" fill="#0b111b"/><ellipse cx="5" cy="11" rx="2" ry="4" fill="#5f6e62"/><ellipse cx="4" cy="17" rx="4" ry="2" fill="#6f7b86"/><ellipse cx="11" cy="19" rx="3" ry="2.5" fill="#7d8894"/><rect x="-2" y="22" width="24" height="10" fill="#0d121c"/><ellipse cx="20" cy="26" rx="6" ry="3" fill="#1a2330"/></g></g></svg></span></td><td><span class="amt">0.0000</span></td><td><span class="st"><i></i>普通用户</span></td><td>0</td><td>0</td><td>2022-01-07 22:29:19</td><td>无</td><td>无</td><td>-</td><td>0.4</td><td></td></tr><tr class="r s"><td><span class="cb"></span></td><td>91</td><td>默认昵称</td><td>18146664097</td><td>118.212.213.90</td><td>江西省南昌市</td><td>0.0000</td><td><span class="av"><svg width="30" height="30" viewBox="0 0 30 30" style=""><defs><filter id="bf6" x="-10%" y="-10%" width="120%" height="120%"><feGaussianBlur stdDeviation="1.3"/></filter><clipPath id="cf6"><rect width="30" height="30"/></clipPath></defs><g clip-path="url(#cf6)"><rect x="-2" y="-2" width="34" height="34" fill="#1a2433"/><g filter="url(#bf6)"><ellipse cx="10" cy="5" rx="10" ry="6" fill="#3a5673"/><ellipse cx="22" cy="6" rx="8" ry="5" fill="#263a52"/><ellipse cx="16" cy="11" rx="10" ry="3" fill="#34475c"/><ellipse cx="25" cy="22" rx="6" ry="6" fill="#7f90a2"/><ellipse cx="29" cy="26" rx="4" ry="5" fill="#93a3b4"/><path d="M13 21C14 14 19 11 27 14" stroke="#0b111b" stroke-width="5" fill="none"/><ellipse cx="24" cy="16" rx="3" ry="2" fill="#0b111b"/><ellipse cx="5" cy="11" rx="2" ry="4" fill="#5f6e62"/><ellipse cx="4" cy="17" rx="4" ry="2" fill="#6f7b86"/><ellipse cx="11" cy="19" rx="3" ry="2.5" fill="#7d8894"/><rect x="-2" y="22" width="24" height="10" fill="#0d121c"/><ellipse cx="20" cy="26" rx="6" ry="3" fill="#1a2330"/></g></g></svg></span></td><td><span class="amt">0.0000</span></td><td><span class="st"><i></i>普通用户</span></td><td>0</td><td>0</td><td>2022-01-07 22:28:58</td><td>无</td><td>无</td><td>-</td><td>0.4</td><td></td></tr><tr class="r"><td><span class="cb"></span></td><td>89</td><td>默认昵称</td><td>18730619310</td><td>183.199.43.230</td><td></td><td>0.0000</td><td><span class="av"><svg width="30" height="30" viewBox="0 0 30 30" style=""><defs><filter id="bf7" x="-10%" y="-10%" width="120%" height="120%"><feGaussianBlur stdDeviation="1.3"/></filter><clipPath id="cf7"><rect width="30" height="30"/></clipPath></defs><g clip-path="url(#cf7)"><rect x="-2" y="-2" width="34" height="34" fill="#1a2433"/><g filter="url(#bf7)"><ellipse cx="10" cy="5" rx="10" ry="6" fill="#3a5673"/><ellipse cx="22" cy="6" rx="8" ry="5" fill="#263a52"/><ellipse cx="16" cy="11" rx="10" ry="3" fill="#34475c"/><ellipse cx="25" cy="22" rx="6" ry="6" fill="#7f90a2"/><ellipse cx="29" cy="26" rx="4" ry="5" fill="#93a3b4"/><path d="M13 21C14 14 19 11 27 14" stroke="#0b111b" stroke-width="5" fill="none"/><ellipse cx="24" cy="16" rx="3" ry="2" fill="#0b111b"/><ellipse cx="5" cy="11" rx="2" ry="4" fill="#5f6e62"/><ellipse cx="4" cy="17" rx="4" ry="2" fill="#6f7b86"/><ellipse cx="11" cy="19" rx="3" ry="2.5" fill="#7d8894"/><rect x="-2" y="22" width="24" height="10" fill="#0d121c"/><ellipse cx="20" cy="26" rx="6" ry="3" fill="#1a2330"/></g></g></svg></span></td><td><span class="amt">0.0000</span></td><td><span class="st"><i></i>普通用户</span></td><td>0</td><td>0</td><td>2022-01-03 00:00:10</td><td>无</td><td>无</td><td>-</td><td>0.4</td><td></td></tr><tr class="r s"><td><span class="cb"></span></td><td>88</td><td>默认昵称</td><td>18846334123</td><td>1.191.13.99</td><td>黑龙江省</td><td>0.0000</td><td><span class="av"><svg width="30" height="30" viewBox="0 0 30 30" style=""><defs><filter id="bf8" x="-10%" y="-10%" width="120%" height="120%"><feGaussianBlur stdDeviation="1.3"/></filter><clipPath id="cf8"><rect width="30" height="30"/></clipPath></defs><g clip-path="url(#cf8)"><rect x="-2" y="-2" width="34" height="34" fill="#1a2433"/><g filter="url(#bf8)"><ellipse cx="10" cy="5" rx="10" ry="6" fill="#3a5673"/><ellipse cx="22" cy="6" rx="8" ry="5" fill="#263a52"/><ellipse cx="16" cy="11" rx="10" ry="3" fill="#34475c"/><ellipse cx="25" cy="22" rx="6" ry="6" fill="#7f90a2"/><ellipse cx="29" cy="26" rx="4" ry="5" fill="#93a3b4"/><path d="M13 21C14 14 19 11 27 14" stroke="#0b111b" stroke-width="5" fill="none"/><ellipse cx="24" cy="16" rx="3" ry="2" fill="#0b111b"/><ellipse cx="5" cy="11" rx="2" ry="4" fill="#5f6e62"/><ellipse cx="4" cy="17" rx="4" ry="2" fill="#6f7b86"/><ellipse cx="11" cy="19" rx="3" ry="2.5" fill="#7d8894"/><rect x="-2" y="22" width="24" height="10" fill="#0d121c"/><ellipse cx="20" cy="26" rx="6" ry="3" fill="#1a2330"/></g></g></svg></span></td><td><span class="amt">0.0000</span></td><td><span class="st"><i></i>普通用户</span></td><td>0</td><td>0</td><td>2022-01-01 16:20:35</td><td>无</td><td>无</td><td>-</td><td>0.4</td><td></td></tr><tr class="r"><td><span class="cb"></span></td><td>87</td><td>薄利多销</td><td>15040904401</td><td>112.39.69.135</td><td>江苏省</td><td>0.0000</td><td><span class="av"><svg width="30" height="30" viewBox="0 0 30 30" style=""><defs><filter id="bf9" x="-10%" y="-10%" width="120%" height="120%"><feGaussianBlur stdDeviation="1.1"/></filter><clipPath id="cf9"><rect width="30" height="30"/></clipPath></defs><g clip-path="url(#cf9)"><rect x="-2" y="-2" width="34" height="34" fill="#2c3a60"/><g filter="url(#bf9)"><rect x="-2" y="-2" width="6" height="34" fill="#38487a"/><rect x="26" y="-2" width="6" height="34" fill="#34508a"/><ellipse cx="15" cy="10" rx="11" ry="9" fill="#1b1f2c"/><path d="M6 23L10 14L12 17L14 13L16 16L18 13L20 17L22 22L17 27L8 28Z" fill="#e6e4ee"/><ellipse cx="19" cy="22" rx="3" ry="3" fill="#b4aacb"/><path d="M16 30L22 24L30 24L30 32Z" fill="#1a2040"/><ellipse cx="4" cy="27" rx="5" ry="4" fill="#aab6ec"/><ellipse cx="23" cy="17" rx="3" ry="6" fill="#1a1e2c"/></g></g></svg></span></td><td><span class="amt">0.0000</span></td><td><span class="st"><i></i>普通用户</span></td><td>0</td><td>0</td><td>2022-01-01 06:49:43</td><td>无</td><td>无</td><td>-</td><td>0.4</td><td></td></tr><tr class="r s"><td><span class="cb"></span></td><td>86</td><td>默认昵称</td><td>13345085564</td><td>111.14.250.111</td><td>山东省济南市</td><td>0.0000</td><td><span class="av"><svg width="30" height="30" viewBox="0 0 30 30" style=""><defs><filter id="bf10" x="-10%" y="-10%" width="120%" height="120%"><feGaussianBlur stdDeviation="1.3"/></filter><clipPath id="cf10"><rect width="30" height="30"/></clipPath></defs><g clip-path="url(#cf10)"><rect x="-2" y="-2" width="34" height="34" fill="#1a2433"/><g filter="url(#bf10)"><ellipse cx="10" cy="5" rx="10" ry="6" fill="#3a5673"/><ellipse cx="22" cy="6" rx="8" ry="5" fill="#263a52"/><ellipse cx="16" cy="11" rx="10" ry="3" fill="#34475c"/><ellipse cx="25" cy="22" rx="6" ry="6" fill="#7f90a2"/><ellipse cx="29" cy="26" rx="4" ry="5" fill="#93a3b4"/><path d="M13 21C14 14 19 11 27 14" stroke="#0b111b" stroke-width="5" fill="none"/><ellipse cx="24" cy="16" rx="3" ry="2" fill="#0b111b"/><ellipse cx="5" cy="11" rx="2" ry="4" fill="#5f6e62"/><ellipse cx="4" cy="17" rx="4" ry="2" fill="#6f7b86"/><ellipse cx="11" cy="19" rx="3" ry="2.5" fill="#7d8894"/><rect x="-2" y="22" width="24" height="10" fill="#0d121c"/><ellipse cx="20" cy="26" rx="6" ry="3" fill="#1a2330"/></g></g></svg></span></td><td><span class="amt">0.0000</span></td><td><span class="st"><i></i>普通用户</span></td><td>0</td><td>0</td><td>2022-01-01 06:09:14</td><td>无</td><td>无</td><td>-</td><td>0.4</td><td></td></tr><tr class="r"><td><span class="cb"></span></td><td>85</td><td>默认昵称</td><td>18883814054</td><td></td><td></td><td>0.0000</td><td><span class="av"><svg width="30" height="30" viewBox="0 0 30 30" style=""><defs><filter id="bf11" x="-10%" y="-10%" width="120%" height="120%"><feGaussianBlur stdDeviation="1.3"/></filter><clipPath id="cf11"><rect width="30" height="30"/></clipPath></defs><g clip-path="url(#cf11)"><rect x="-2" y="-2" width="34" height="34" fill="#1a2433"/><g filter="url(#bf11)"><ellipse cx="10" cy="5" rx="10" ry="6" fill="#3a5673"/><ellipse cx="22" cy="6" rx="8" ry="5" fill="#263a52"/><ellipse cx="16" cy="11" rx="10" ry="3" fill="#34475c"/><ellipse cx="25" cy="22" rx="6" ry="6" fill="#7f90a2"/><ellipse cx="29" cy="26" rx="4" ry="5" fill="#93a3b4"/><path d="M13 21C14 14 19 11 27 14" stroke="#0b111b" stroke-width="5" fill="none"/><ellipse cx="24" cy="16" rx="3" ry="2" fill="#0b111b"/><ellipse cx="5" cy="11" rx="2" ry="4" fill="#5f6e62"/><ellipse cx="4" cy="17" rx="4" ry="2" fill="#6f7b86"/><ellipse cx="11" cy="19" rx="3" ry="2.5" fill="#7d8894"/><rect x="-2" y="22" width="24" height="10" fill="#0d121c"/><ellipse cx="20" cy="26" rx="6" ry="3" fill="#1a2330"/></g></g></svg></span></td><td><span class="amt">0.0000</span></td><td><span class="st"><i></i>普通用户</span></td><td>0</td><td>0</td><td>2021-12-31 18:57:19</td><td>无</td><td>无</td><td>-</td><td>0.4</td><td></td></tr><tr class="r s"><td><span class="cb"></span></td><td>84</td><td>默认昵称</td><td>13823828739</td><td>116.5.141.99</td><td>广东省梅州市</td><td>0.0000</td><td><span class="av"><svg width="30" height="30" viewBox="0 0 30 30" style=""><defs><filter id="bf12" x="-10%" y="-10%" width="120%" height="120%"><feGaussianBlur stdDeviation="1.3"/></filter><clipPath id="cf12"><rect width="30" height="30"/></clipPath></defs><g clip-path="url(#cf12)"><rect x="-2" y="-2" width="34" height="34" fill="#1a2433"/><g filter="url(#bf12)"><ellipse cx="10" cy="5" rx="10" ry="6" fill="#3a5673"/><ellipse cx="22" cy="6" rx="8" ry="5" fill="#263a52"/><ellipse cx="16" cy="11" rx="10" ry="3" fill="#34475c"/><ellipse cx="25" cy="22" rx="6" ry="6" fill="#7f90a2"/><ellipse cx="29" cy="26" rx="4" ry="5" fill="#93a3b4"/><path d="M13 21C14 14 19 11 27 14" stroke="#0b111b" stroke-width="5" fill="none"/><ellipse cx="24" cy="16" rx="3" ry="2" fill="#0b111b"/><ellipse cx="5" cy="11" rx="2" ry="4" fill="#5f6e62"/><ellipse cx="4" cy="17" rx="4" ry="2" fill="#6f7b86"/><ellipse cx="11" cy="19" rx="3" ry="2.5" fill="#7d8894"/><rect x="-2" y="22" width="24" height="10" fill="#0d121c"/><ellipse cx="20" cy="26" rx="6" ry="3" fill="#1a2330"/></g></g></svg></span></td><td><span class="amt">0.0000</span></td><td><span class="st"><i></i>普通用户</span></td><td>0</td><td>0</td><td>2021-12-29 23:28:21</td><td>无</td><td>无</td><td>-</td><td>0.4</td><td></td></tr><tr class="r"><td><span class="cb"></span></td><td>83</td><td>默认昵称</td><td>17130779853</td><td>120.239.199.31</td><td></td><td>0.0000</td><td><span class="av"><svg width="30" height="30" viewBox="0 0 30 30" style=""><defs><filter id="bf13" x="-10%" y="-10%" width="120%" height="120%"><feGaussianBlur stdDeviation="1.3"/></filter><clipPath id="cf13"><rect width="30" height="30"/></clipPath></defs><g clip-path="url(#cf13)"><rect x="-2" y="-2" width="34" height="34" fill="#1a2433"/><g filter="url(#bf13)"><ellipse cx="10" cy="5" rx="10" ry="6" fill="#3a5673"/><ellipse cx="22" cy="6" rx="8" ry="5" fill="#263a52"/><ellipse cx="16" cy="11" rx="10" ry="3" fill="#34475c"/><ellipse cx="25" cy="22" rx="6" ry="6" fill="#7f90a2"/><ellipse cx="29" cy="26" rx="4" ry="5" fill="#93a3b4"/><path d="M13 21C14 14 19 11 27 14" stroke="#0b111b" stroke-width="5" fill="none"/><ellipse cx="24" cy="16" rx="3" ry="2" fill="#0b111b"/><ellipse cx="5" cy="11" rx="2" ry="4" fill="#5f6e62"/><ellipse cx="4" cy="17" rx="4" ry="2" fill="#6f7b86"/><ellipse cx="11" cy="19" rx="3" ry="2.5" fill="#7d8894"/><rect x="-2" y="22" width="24" height="10" fill="#0d121c"/><ellipse cx="20" cy="26" rx="6" ry="3" fill="#1a2330"/></g></g></svg></span></td><td><span class="amt">0.0000</span></td><td><span class="st"><i></i>普通用户</span></td><td>0</td><td>0</td><td>2021-12-29 14:02:50</td><td>无</td><td>无</td><td>-</td><td>0.4</td><td></td></tr><tr class="r s"><td><span class="cb"></span></td><td>82</td><td>爱阴湿坦</td><td>13060427883</td><td>113.201.132.182</td><td>陕西省</td><td>0.0000</td><td><span class="av"><svg width="30" height="30" viewBox="0 0 30 30" style=""><defs><filter id="bf14" x="-10%" y="-10%" width="120%" height="120%"><feGaussianBlur stdDeviation="1.4"/></filter><clipPath id="cf14"><rect width="30" height="30"/></clipPath></defs><g clip-path="url(#cf14)"><rect x="-2" y="-2" width="34" height="34" fill="#d69c9c"/><g filter="url(#bf14)"><ellipse cx="6" cy="6" rx="6" ry="7" fill="#5e2c34"/><ellipse cx="26" cy="8" rx="5" ry="10" fill="#8e7474"/><ellipse cx="16" cy="9" rx="6" ry="7" fill="#f2c4c4"/><ellipse cx="19" cy="16" rx="2" ry="2" fill="#a86a6a"/><ellipse cx="5" cy="20" rx="5" ry="8" fill="#dca4a4"/><ellipse cx="24" cy="19" rx="2" ry="3" fill="#7a4444"/><ellipse cx="26" cy="26" rx="5" ry="5" fill="#eab8c0"/><ellipse cx="10" cy="28" rx="4" ry="3" fill="#c85858"/></g></g></svg></span></td><td><span class="amt">0.0000</span></td><td><span class="st2"><i></i>创作个人号</span></td><td>1</td><td>0</td><td>2021-12-29 08:10:30</td><td>无</td><td>无</td><td>0</td><td></td><td></td></tr></table></div></div>
<div class="a" style="left:1872px;top:886px;width:24px;height:43px;background:#f9f9f9"></div>
<svg class="a" style="left:830px;top:435px" width="270" height="60" viewBox="0 0 270 60"><g opacity="0.06" transform="translate(10 47) skewX(-12)"><text x="0" y="0" font-family="Liberation Sans" font-size="36" font-weight="bold" stroke="#000" stroke-width="2.6" stroke-linejoin="round" fill="#000" letter-spacing="9">71客源码网</text></g></svg>
</body></html>
